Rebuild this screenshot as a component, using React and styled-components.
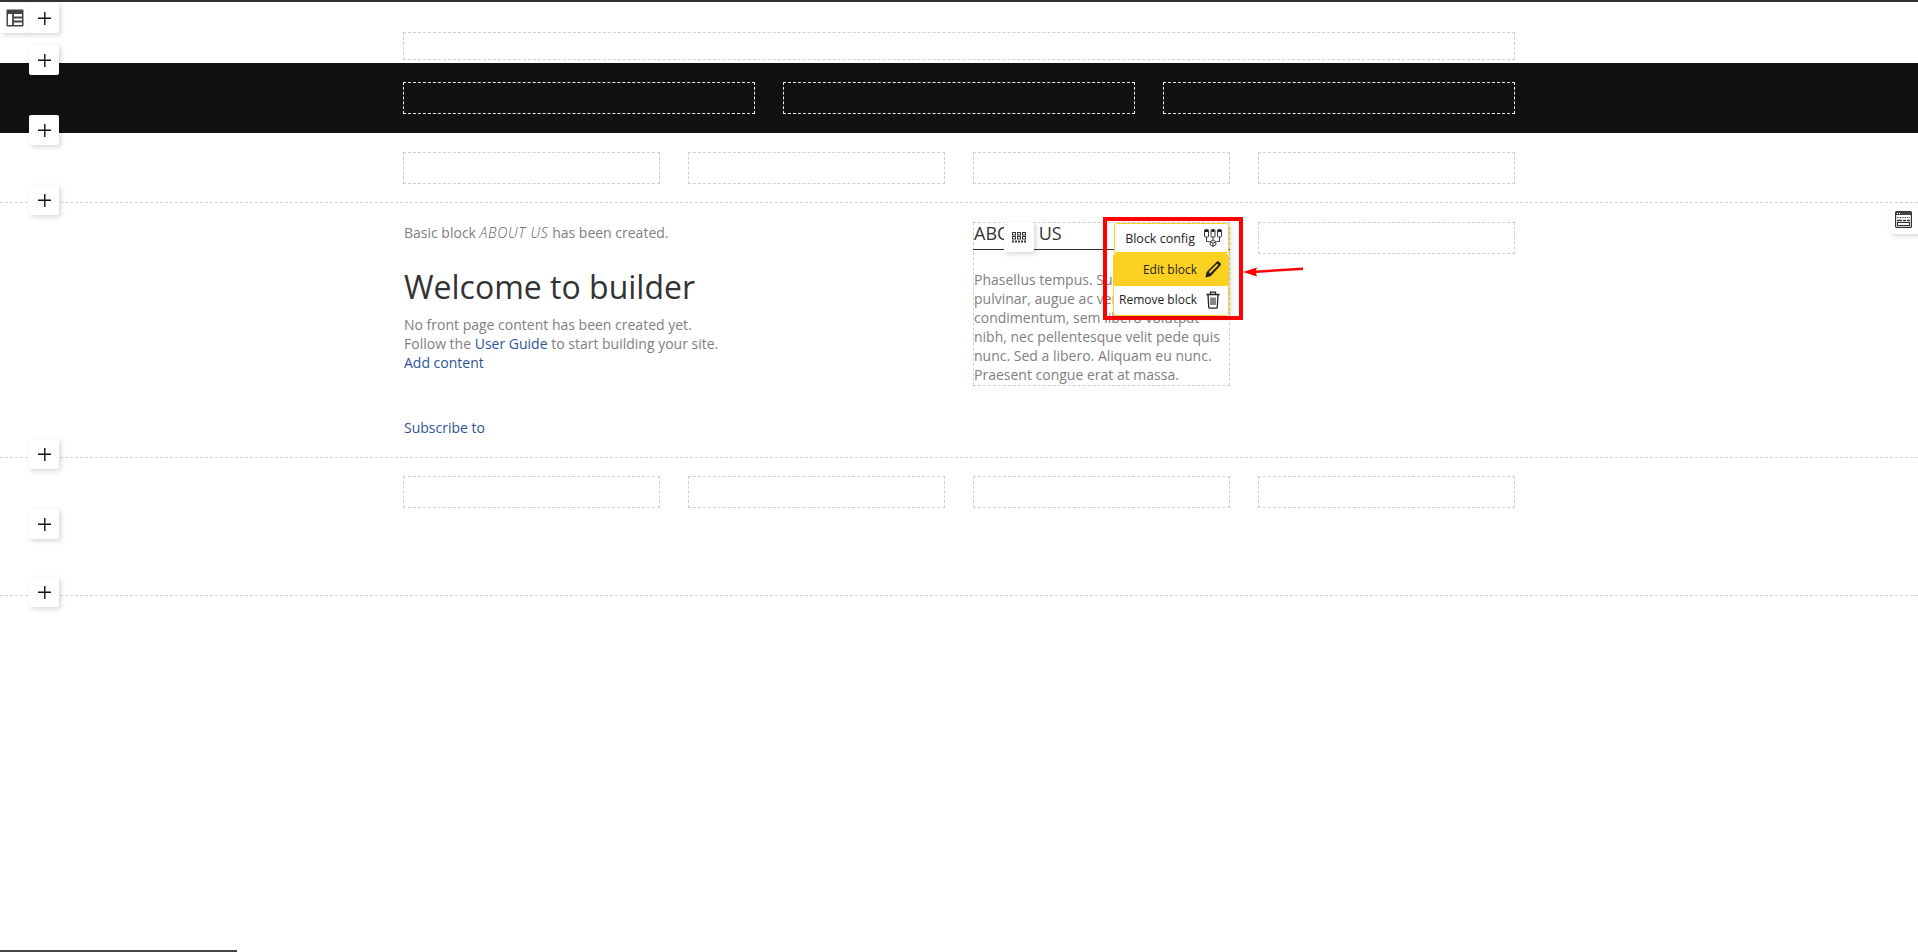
import React from "react";
import styled, { createGlobalStyle } from "styled-components";

const GlobalStyle = createGlobalStyle`
  html, body {
    margin: 0;
    padding: 0;
    background: #fff;
    font-family: "Open Sans", sans-serif;
    font-size: 14px;
    line-height: 19px;
    color: #808080;
    overflow: hidden;
  }
`;

const Page = styled.div`
  position: relative;
  height: 952px;
  border-top: 2px solid #333;
  box-sizing: border-box;
  overflow: hidden;
`;

const TopSection = styled.section`
  position: relative;
  height: 61px;
  padding-top: 30px;
  box-sizing: border-box;
`;

const Band = styled.section`
  position: relative;
  height: 70px;
  background: #111;
  padding-top: 19px;
  box-sizing: border-box;
`;

const Section = styled.section`
  position: relative;
  height: ${(props) => props.height}px;
  padding-top: ${(props) => props.top || 19}px;
  box-sizing: border-box;
  border-bottom: 1px dashed #d4d4d4;
`;

const Container = styled.div`
  width: 1112px;
  margin-left: 403px;
  display: grid;
  grid-template-columns: repeat(${(props) => props.cols}, 1fr);
  column-gap: ${(props) => props.gap}px;
  align-items: start;
`;

const Slot = styled.div`
  height: ${(props) => props.height || 32}px;
  box-sizing: border-box;
  border: 1px dashed #d0d0d0;
`;

const DarkSlot = styled(Slot)`
  border-color: #eee;
`;

const IconButton = styled.div`
  position: absolute;
  left: ${(props) => props.left}px;
  top: ${(props) => props.top}px;
  width: 30px;
  height: 30px;
  display: flex;
  align-items: center;
  justify-content: center;
  background: #fff;
  border-radius: 2px;
  box-shadow: 2px 2px 5px rgba(0, 0, 0, 0.16);
  z-index: 3;
`;

const EdgeButton = styled(IconButton)`
  left: 1889px;
  width: 29px;
  border-radius: 5px 0 0 5px;
`;

const MainColumn = styled.div`
  grid-column: span 2;
  padding-left: 1px;
  padding-top: 1px;
`;

const Notice = styled.p`
  margin: 0;
  height: 19px;
  em {
    font-style: italic;
    font-weight: 300;
    letter-spacing: 0.75px;
    color: #5c5c5c;
  }
`;

const Title = styled.h1`
  margin: 23px 0 6px;
  font-size: 32px;
  line-height: 44px;
  font-weight: 400;
  color: #333;
`;

const Paragraph = styled.p`
  margin: 0;
`;

const BlueLink = styled.a`
  color: #2d5597;
  text-decoration: none;
`;

const Subscribe = styled.p`
  margin: 46px 0 0;
`;

const BlockColumn = styled.div`
  position: relative;
  height: 164px;
  box-sizing: border-box;
  border: 1px dashed #d0d0d0;
`;

const BlockTitle = styled.h2`
  margin: 0 -1px;
  padding-left: 1px;
  height: 26px;
  font-size: 18px;
  line-height: 20px;
  font-weight: 400;
  color: #333;
  border-bottom: 1px solid #333;
`;

const BlockText = styled.p`
  margin: 20px 0 0;
  white-space: pre-line;
`;

const BlockMove = styled(IconButton)`
  left: 30px;
  top: -1px;
`;

const HighlightFrame = styled.div`
  position: absolute;
  left: 1103px;
  top: 215px;
  width: 140px;
  height: 103px;
  box-sizing: border-box;
  border: 4px solid #f00;
  z-index: 4;
`;

const Menu = styled.div`
  position: absolute;
  left: 1113px;
  top: 221px;
  width: 116px;
  z-index: 5;
  display: flex;
  flex-direction: column;
  font-size: 12px;
  color: #222;
  box-shadow: 2px 2px 5px rgba(0, 0, 0, 0.16);
`;

const MenuItem = styled.div`
  height: ${(props) => props.height}px;
  margin-left: ${(props) => props.inset || 0}px;
  display: flex;
  align-items: center;
  justify-content: flex-end;
  gap: ${(props) => props.gap || 7}px;
  padding-right: 6px;
  padding-bottom: ${(props) => props.lift || 0}px;
  box-sizing: border-box;
  font-size: ${(props) => props.size || 12}px;
  background: ${(props) => (props.active ? "#fdd122" : "#fff")};
  border: 1px solid #fdd122;
  border-radius: ${(props) => props.radius || "0"};
  white-space: nowrap;
`;

const MenuIcon = styled.svg`
  width: 18px;
  height: 18px;
  flex: none;
`;

const Arrow = styled.svg`
  position: absolute;
  left: 1240px;
  top: 258px;
  z-index: 4;
`;

const BottomBar = styled.div`
  position: absolute;
  left: 0;
  bottom: 0;
  width: 237px;
  height: 2px;
  background: #444;
`;

const PlusIcon = () => (
  <svg width="13" height="13" viewBox="0 0 13 13">
    <path d="M6.800 0v13M0 6.200h13" stroke="#111" strokeWidth="1.400" fill="none" />
  </svg>
);

const TableIcon = () => (
  <svg width="18" height="18" viewBox="0 0 18 18">
    <rect x="0.5" y="0.5" width="17" height="17" rx="1" fill="#444" />
    <rect x="2" y="5" width="14" height="11" fill="#fff" />
    <path d="M7 5v11M7 8.500h9M7 12.500h9" stroke="#444" strokeWidth="1.800" fill="none" />
  </svg>
);

const QrIcon = () => (
  <svg width="14" height="11" viewBox="0 0 14 11" fill="none" stroke="#333" strokeWidth="1">
    <rect x="0.5" y="0.5" width="3" height="2.500" />
    <rect x="5.500" y="0.5" width="3" height="2.500" />
    <rect x="10.500" y="0.5" width="3" height="2.500" />
    <rect x="0.5" y="4.500" width="3" height="2.500" />
    <rect x="5.500" y="4.500" width="3" height="2.500" />
    <rect x="10.500" y="4.500" width="3" height="2.500" />
    <path d="M0 9.500h14" strokeWidth="2" strokeDasharray="2 1" />
  </svg>
);

const LayoutIcon = () => (
  <svg width="17" height="17" viewBox="0 0 17 17">
    <rect x="0.6" y="0.6" width="15.800" height="15.800" rx="1" fill="#fff" stroke="#333" strokeWidth="1.200" />
    <rect x="1" y="1" width="15" height="3" fill="#444" />
    <path d="M2 2.500h3" stroke="#fff" strokeWidth="1" strokeDasharray="1 1" />
    <path d="M2 6.500h13" stroke="#555" strokeWidth="1" strokeDasharray="1.500 1" />
    <path d="M2 9.500h13" stroke="#333" strokeWidth="1.400" strokeDasharray="5 1 3 1" />
    <rect x="2.500" y="11.500" width="12" height="3" fill="#fff" stroke="#333" strokeWidth="1" />
  </svg>
);

const ConfigIcon = () => (
  <MenuIcon viewBox="0 0 18 18" fill="none" stroke="#222" strokeWidth="0.9">
    <rect x="0.5" y="0.5" width="4" height="7.500" rx="0.8" fill="#fff" />
    <rect x="7" y="0.5" width="4" height="7.500" rx="0.8" fill="#fff" />
    <rect x="13.500" y="0.5" width="4" height="7.500" rx="0.8" fill="#fff" />
    <path d="M1 2h3M7.500 2h3M14 2h3" strokeWidth="2.200" />
    <path d="M2.500 8v4.500h3M9 8v3.200M15.500 8v4.500h-3" />
    <path d="M9 11l2.800 1.600v3.200L9 17.400l-2.800-1.600v-3.200zM6.200 12.600L9 14.200l2.800-1.600M9 14.200v3.200" />
  </MenuIcon>
);

const PencilIcon = () => (
  <MenuIcon viewBox="0 0 18 18">
    <path d="M1.500 17.500l1.100-5.600L12.800 1.700c.6-.6 1.500-.6 2.100 0l1.600 1.600c.6.6.6 1.500 0 2.100L6.600 16.200z" fill="#222" />
    <path d="M4.800 12.100l8.300-8.300 1.300 1.300-8.300 8.300z" fill="#fdd122" />
  </MenuIcon>
);

const TrashIcon = () => (
  <MenuIcon viewBox="0 0 18 18" fill="none" stroke="#222" strokeWidth="1.300">
    <path d="M2.500 3.500h13M6.500 3V1.200h5V3" />
    <path d="M4 3.500l.7 12.500c0 .7.500 1.200 1.200 1.200h6.200c.7 0 1.200-.5 1.200-1.200L14 3.500" />
    <path d="M7 6.500v7.500M9 6.500v7.500M11 6.500v7.500" strokeWidth="1.100" />
  </MenuIcon>
);

const fourSlots = [0, 1, 2, 3];

export default function App() {
  return (
    <Page>
      <GlobalStyle />

      <IconButton left={0} top={1}>
        <TableIcon />
      </IconButton>
      <IconButton left={29} top={1}>
        <PlusIcon />
      </IconButton>

      <TopSection>
        <Container cols={1} gap={0}>
          <Slot height={28} />
        </Container>
      </TopSection>

      <Band>
        <IconButton left={29} top={-18}>
          <PlusIcon />
        </IconButton>
        <IconButton left={29} top={52}>
          <PlusIcon />
        </IconButton>
        <Container cols={3} gap={28}>
          <DarkSlot />
          <DarkSlot />
          <DarkSlot />
        </Container>
      </Band>

      <Section height={70}>
        <IconButton left={29} top={52}>
          <PlusIcon />
        </IconButton>
        <Container cols={4} gap={28}>
          {fourSlots.map((n) => (
            <Slot key={n} />
          ))}
        </Container>
      </Section>

      <Section height={255}>
        <IconButton left={29} top={236}>
          <PlusIcon />
        </IconButton>
        <EdgeButton top={1}>
          <LayoutIcon />
        </EdgeButton>
        <Container cols={4} gap={28}>
          <MainColumn>
            <Notice>
              Basic block <em>ABOUT US</em> has been created.
            </Notice>
            <Title>Welcome to builder</Title>
            <Paragraph>
              No front page content has been created yet.
              <br />
              Follow the <BlueLink>User Guide</BlueLink> to start building your site.
              <br />
              <BlueLink>Add content</BlueLink>
            </Paragraph>
            <Subscribe>
              <BlueLink>Subscribe to</BlueLink>
            </Subscribe>
          </MainColumn>
          <BlockColumn>
            <BlockTitle>ABOUT US</BlockTitle>
            <BlockMove>
              <QrIcon />
            </BlockMove>
            <BlockText>
              {"Phasellus tempus. Suspendisse\npulvinar, augue ac venenatis\ncondimentum, sem libero volutpat\nnibh, nec pellentesque velit pede quis\nnunc. Sed a libero. Aliquam eu nunc.\nPraesent congue erat at massa."}
            </BlockText>
          </BlockColumn>
          <Slot />
        </Container>
      </Section>

      <Section height={138} top={18}>
        <IconButton left={29} top={51}>
          <PlusIcon />
        </IconButton>
        <IconButton left={29} top={119}>
          <PlusIcon />
        </IconButton>
        <Container cols={4} gap={28}>
          {fourSlots.map((n) => (
            <Slot key={n} />
          ))}
        </Container>
      </Section>

      <HighlightFrame />
      <Menu>
        <MenuItem height={30} inset={1} radius="3px 3px 0 0" gap={9} size={12.5}>
          Block config
          <ConfigIcon />
        </MenuItem>
        <MenuItem height={32} active radius="4px 4px 0 0">
          Edit block
          <PencilIcon />
        </MenuItem>
        <MenuItem height={31} radius="0 0 3px 3px" lift={2}>
          Remove block
          <TrashIcon />
        </MenuItem>
      </Menu>
      <Arrow width="66" height="20" viewBox="0 0 66 20">
        <path d="M3 12L17 7.500l-1 3L63 7.500V10L16 13l1 3.500z" fill="#f00" />
      </Arrow>

      <BottomBar />
    </Page>
  );
}
